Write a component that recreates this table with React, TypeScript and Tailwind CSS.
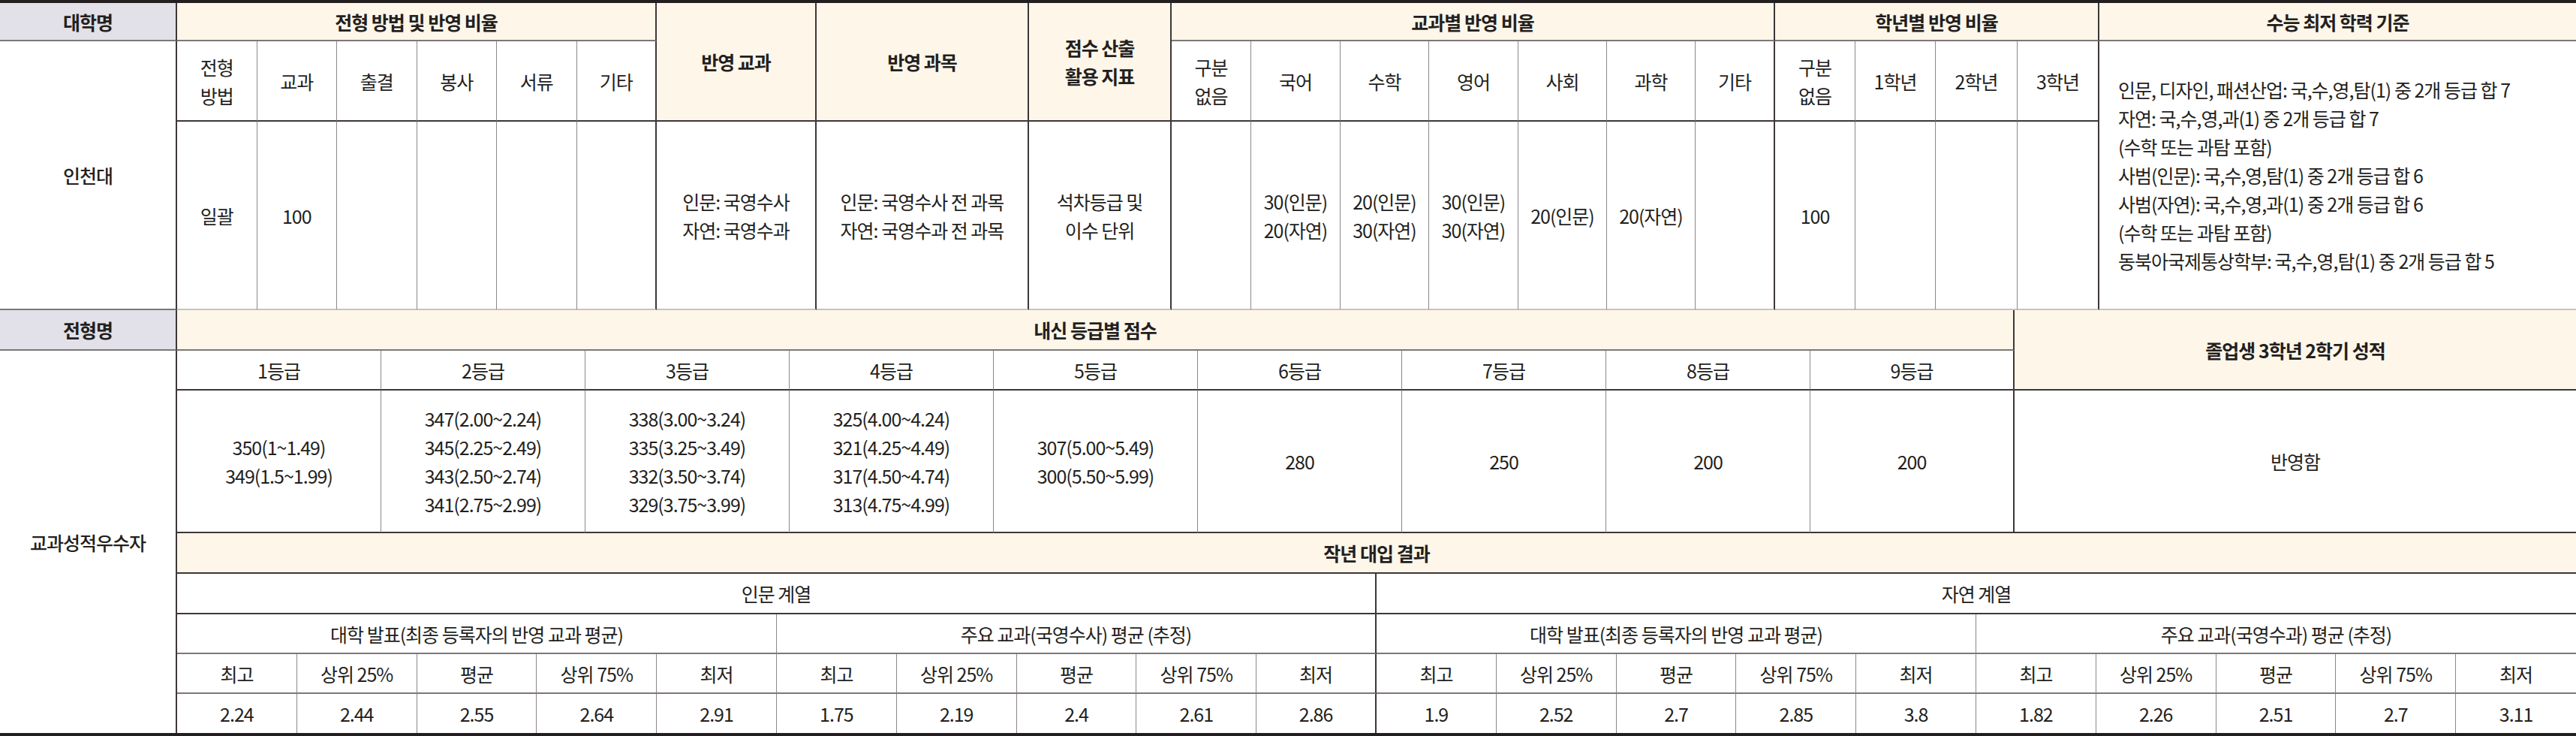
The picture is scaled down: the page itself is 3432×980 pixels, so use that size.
import React from "react";

const rD = "border-r-2 border-r-[#3d3738]";
const rG = "border-r border-r-[#8c8788]";
const bD = "border-b-2 border-b-[#3d3738]";
const bM = "border-b-2 border-b-[#7d7778]";
const bL = "border-b-2 border-b-[#c6c3c4]";
const cream = "bg-[#fdf6e9] font-semibold";
const lav = "bg-[#e2e0e8] font-semibold";

function C({ className = "", children }: { className?: string; children?: React.ReactNode }) {
  return <div className={"flex items-center justify-center text-center " + className}>{children}</div>;
}

export default function App() {
  const sub1 = ["교과", "출결", "봉사", "서류"];
  const subj = ["국어", "수학", "영어", "사회", "과학"];
  const grades = ["1등급", "2등급", "3등급", "4등급", "5등급", "6등급", "7등급", "8등급", "9등급"];
  const gradeVals: string[][] = [
    ["350(1~1.49)", "349(1.5~1.99)"],
    ["347(2.00~2.24)", "345(2.25~2.49)", "343(2.50~2.74)", "341(2.75~2.99)"],
    ["338(3.00~3.24)", "335(3.25~3.49)", "332(3.50~3.74)", "329(3.75~3.99)"],
    ["325(4.00~4.24)", "321(4.25~4.49)", "317(4.50~4.74)", "313(4.75~4.99)"],
    ["307(5.00~5.49)", "300(5.50~5.99)"],
    ["280"],
    ["250"],
    ["200"],
    ["200"],
  ];
  const labels = ["최고", "상위 25%", "평균", "상위 75%", "최저"];
  const vals = ["2.24", "2.44", "2.55", "2.64", "2.91", "1.75", "2.19", "2.4", "2.61", "2.86", "1.9", "2.52", "2.7", "2.85", "3.8", "1.82", "2.26", "2.51", "2.7", "3.11"];

  return (
    <div className="w-[3432px] h-[980px] bg-white text-[#231f20] text-[25px] leading-[38px] tracking-[-0.04em] font-['Noto_Sans_CJK_KR','Noto_Sans',sans-serif] overflow-hidden">
      {/* Section A */}
      <div className="grid border-t-4 border-t-[#231f20] grid-cols-[236px_repeat(6,106.5px)_213px_283px_190px_106px_119px_118px_119px_118px_118px_106px_107px_107px_109px_109px_1fr] grid-rows-[51px_107px_251px]">
        <C className={`${lav} ${rD} ${bM}`}>대학명</C>
        <C className={`col-span-6 ${cream} ${rD} ${bM}`}>전형 방법 및 반영 비율</C>
        <C className={`row-span-2 ${cream} ${rD} ${bD}`}>반영 교과</C>
        <C className={`row-span-2 ${cream} ${rD} ${bD}`}>반영 과목</C>
        <C className={`row-span-2 ${cream} ${rD} ${bD}`}>
          점수 산출
          <br />
          활용 지표
        </C>
        <C className={`col-span-7 ${cream} ${rD} ${bM}`}>교과별 반영 비율</C>
        <C className={`col-span-4 ${cream} ${rD} ${bM}`}>학년별 반영 비율</C>
        <C className={`${cream} ${bM}`}>수능 최저 학력 기준</C>

        {/* row 2 */}
        <C className={`row-span-2 font-medium ${rD} ${bM}`}>인천대</C>
        <C className={`${rG} ${bD}`}>
          전형
          <br />
          방법
        </C>
        {sub1.map((s) => (
          <C key={s} className={`${rG} ${bD}`}>
            {s}
          </C>
        ))}
        <C className={`${rD} ${bD}`}>기타</C>
        <C className={`${rG} ${bD}`}>
          구분
          <br />
          없음
        </C>
        {subj.map((s) => (
          <C key={s} className={`${rG} ${bD}`}>
            {s}
          </C>
        ))}
        <C className={`${rD} ${bD}`}>기타</C>
        <C className={`${rG} ${bD}`}>
          구분
          <br />
          없음
        </C>
        <C className={`${rG} ${bD}`}>1학년</C>
        <C className={`${rG} ${bD}`}>2학년</C>
        <C className={`${rD} ${bD}`}>3학년</C>
        <div className={`row-span-2 flex items-center pl-[25px] ${bL}`}>
          <div className="text-left">
            인문, 디자인, 패션산업: 국,수,영,탐(1) 중 2개 등급 합 7
            <br />
            자연: 국,수,영,과(1) 중 2개 등급 합 7
            <br />
            (수학 또는 과탐 포함)
            <br />
            사범(인문): 국,수,영,탐(1) 중 2개 등급 합 6
            <br />
            사범(자연): 국,수,영,과(1) 중 2개 등급 합 6
            <br />
            (수학 또는 과탐 포함)
            <br />
            동북아국제통상학부: 국,수,영,탐(1) 중 2개 등급 합 5
          </div>
        </div>

        {/* row 3 */}
        <C className={`${rG} ${bL}`}>일괄</C>
        <C className={`${rG} ${bL}`}>100</C>
        <C className={`${rG} ${bL}`} />
        <C className={`${rG} ${bL}`} />
        <C className={`${rG} ${bL}`} />
        <C className={`${rD} ${bL}`} />
        <C className={`${rD} ${bL}`}>
          인문: 국영수사
          <br />
          자연: 국영수과
        </C>
        <C className={`${rD} ${bL}`}>
          인문: 국영수사 전 과목
          <br />
          자연: 국영수과 전 과목
        </C>
        <C className={`${rD} ${bL}`}>
          석차등급 및
          <br />
          이수 단위
        </C>
        <C className={`${rG} ${bL}`} />
        <C className={`${rG} ${bL}`}>
          30(인문)
          <br />
          20(자연)
        </C>
        <C className={`${rG} ${bL}`}>
          20(인문)
          <br />
          30(자연)
        </C>
        <C className={`${rG} ${bL}`}>
          30(인문)
          <br />
          30(자연)
        </C>
        <C className={`${rG} ${bL}`}>20(인문)</C>
        <C className={`${rG} ${bL}`}>20(자연)</C>
        <C className={`${rD} ${bL}`} />
        <C className={`${rG} ${bL}`}>100</C>
        <C className={`${rG} ${bL}`} />
        <C className={`${rG} ${bL}`} />
        <C className={`${rD} ${bL}`} />
      </div>

      {/* Section B */}
      <div className="flex border-b-4 border-b-[#231f20] h-[567px]">
        <div className="w-[236px] shrink-0 flex flex-col">
          <C className={`h-[54px] ${lav} ${rD} ${bM}`}>전형명</C>
          <C className={`flex-1 font-medium ${rD}`}>교과성적우수자</C>
        </div>
        <div className="flex-1 flex flex-col">
          <div className="grid grid-cols-[repeat(9,272px)_1fr] grid-rows-[54px_53px_190px]">
            <C className={`col-span-9 ${cream} ${rD} ${bM}`}>내신 등급별 점수</C>
            <C className={`row-span-2 ${cream} ${bD}`}>졸업생 3학년 2학기 성적</C>
            {grades.map((g, i) => (
              <C key={g} className={`${i === 8 ? rD : rG} ${bD}`}>
                {g}
              </C>
            ))}
            {gradeVals.map((v, i) => (
              <C key={i} className={`${i === 8 ? rD : rG} ${bD}`}>
                <div>
                  {v.map((line, j) => (
                    <div key={j}>{line}</div>
                  ))}
                </div>
              </C>
            ))}
            <C className={`${bD}`}>반영함</C>
          </div>
          <div className="flex-1 grid grid-cols-[repeat(20,minmax(0,1fr))] grid-rows-[54px_54px_53px_53px_1fr]">
            <C className={`col-span-20 ${cream} ${bD}`}>작년 대입 결과</C>
            <C className={`col-span-10 ${rD} ${bD}`}>인문 계열</C>
            <C className={`col-span-10 ${bD}`}>자연 계열</C>
            <C className={`col-span-5 ${rG} ${bM}`}>대학 발표(최종 등록자의 반영 교과 평균)</C>
            <C className={`col-span-5 ${rD} ${bM}`}>주요 교과(국영수사) 평균 (추정)</C>
            <C className={`col-span-5 ${rG} ${bM}`}>대학 발표(최종 등록자의 반영 교과 평균)</C>
            <C className={`col-span-5 ${bM}`}>주요 교과(국영수과) 평균 (추정)</C>
            {[0, 1, 2, 3].flatMap((grp) =>
              labels.map((l, i) => (
                <C key={`${grp}-${i}`} className={`${grp === 3 && i === 4 ? "" : grp === 1 && i === 4 ? rD : rG} ${bM}`}>
                  {l}
                </C>
              ))
            )}
            {vals.map((v, i) => (
              <C key={i} className={`${i === 19 ? "" : i === 9 ? rD : rG}`}>
                {v}
              </C>
            ))}
          </div>
        </div>
      </div>
    </div>
  );
}
